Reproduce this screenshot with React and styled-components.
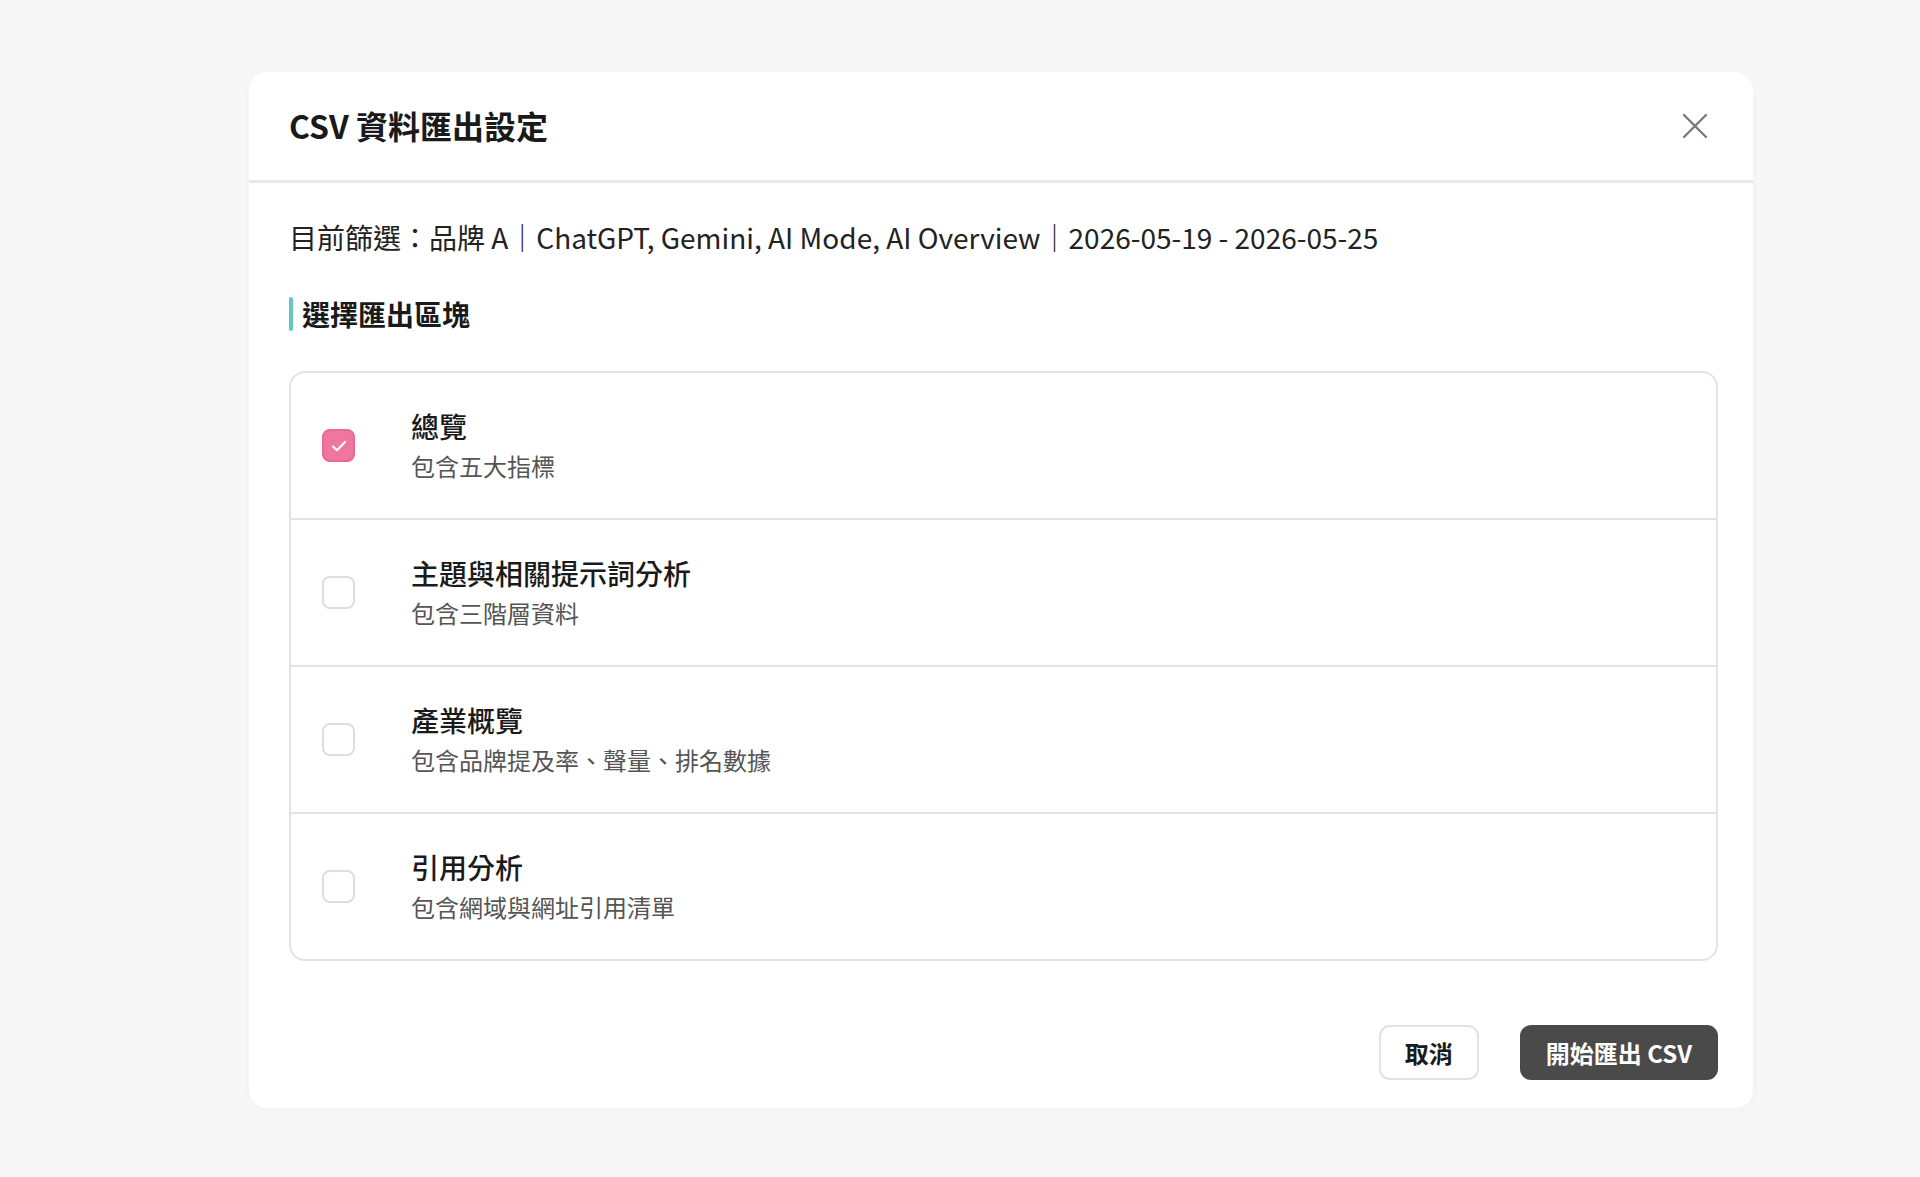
import React, { useState } from 'react';
import styled, { createGlobalStyle } from 'styled-components';

const GlobalStyle = createGlobalStyle`
    html, body {
        margin: 0;
        padding: 0;
        background: #f7f7f7;
    }
    body {
        font-family: "Noto Sans CJK TC", "Noto Sans", "Liberation Sans", sans-serif;
        color: #1c1c1c;
    }
    * { box-sizing: border-box; }
`;

const secciones = [
    { id: 'overview', titulo: '總覽', desc: '包含五大指標' },
    { id: 'topics', titulo: '主題與相關提示詞分析', desc: '包含三階層資料' },
    { id: 'industry', titulo: '產業概覽', desc: '包含品牌提及率、聲量、排名數據' },
    { id: 'citation', titulo: '引用分析', desc: '包含網域與網址引用清單' },
];

const App = () => {
    const [marcados, setMarcados] = useState({ overview: true });

    const toggle = (id) => setMarcados({ ...marcados, [id]: !marcados[id] });

    return (
        <>
            <GlobalStyle />
            <Pagina>
                <ContenedorModal>
                    <EncabezadoModal>
                        <h3>CSV 資料匯出設定</h3>
                        <BotonCerrar aria-label="close">
                            <svg width="26" height="26" viewBox="0 0 26 26" fill="none" stroke="currentColor" strokeWidth="2.4" strokeLinecap="round">
                                <path d="M2 2L24 24M24 2L2 24" />
                            </svg>
                        </BotonCerrar>
                    </EncabezadoModal>

                    <Cuerpo>
                        <Filtro>目前篩選：品牌 A｜ChatGPT, Gemini, AI Mode, AI Overview｜2026-05-19 - 2026-05-25</Filtro>
                        <TituloSeccion>選擇匯出區塊</TituloSeccion>

                        <Lista>
                            {secciones.map((s) => (
                                <Fila key={s.id} onClick={() => toggle(s.id)}>
                                    <Casilla $activo={!!marcados[s.id]}>
                                        {marcados[s.id] && (
                                            <svg width="22" height="22" viewBox="0 0 22 22" fill="none" stroke="#fff" strokeWidth="2.2" strokeLinecap="round" strokeLinejoin="round">
                                                <path d="M5 11.5l4 3.8L17 7" />
                                            </svg>
                                        )}
                                    </Casilla>
                                    <Textos>
                                        <TituloFila>{s.titulo}</TituloFila>
                                        <Descripcion>{s.desc}</Descripcion>
                                    </Textos>
                                </Fila>
                            ))}
                        </Lista>
                    </Cuerpo>

                    <Pie>
                        <Boton>取消</Boton>
                        <Boton $primario>開始匯出 CSV</Boton>
                    </Pie>
                </ContenedorModal>
            </Pagina>
        </>
    );
};

export default App;

const Pagina = styled.div`
    min-height: 100vh;
    padding: 72px 167px 69px 249px;
    display: flex;
    align-items: flex-start;
`;

const ContenedorModal = styled.div`
    width: 1504px;
    height: 1036px;
    background: #fff;
    border-radius: 18px;
    box-shadow: rgba(0, 0, 0, 0.03) 0px 2px 10px 0px;
    display: flex;
    flex-direction: column;
`;

const EncabezadoModal = styled.div`
    height: 111px;
    display: flex;
    align-items: center;
    justify-content: space-between;
    padding: 0 40px 0 40px;
    border-bottom: 3px solid #e8e8e8;

    h3 {
        margin: 0;
        font-size: 32px;
        font-weight: 700;
        color: #1a1a1a;
        line-height: 1.3;
    }
`;

const BotonCerrar = styled.button`
    width: 36px;
    height: 36px;
    display: flex;
    align-items: center;
    justify-content: center;
    border: none;
    background: none;
    padding: 0;
    cursor: pointer;
    color: #7a7a7a;
`;

const Cuerpo = styled.div`
    flex: 1;
    padding: 33px 35px 0 40px;
    display: flex;
    flex-direction: column;
`;

const Filtro = styled.div`
    font-size: 28px;
    line-height: 42px;
    color: #222;
`;

const TituloSeccion = styled.div`
    margin-top: 35px;
    display: flex;
    align-items: center;
    gap: 9px;
    font-size: 28px;
    font-weight: 700;
    line-height: 42px;
    color: #1a1a1a;

    &::before {
        content: '';
        width: 4px;
        height: 34px;
        border-radius: 2px;
        background: #66c6c4;
    }
`;

const Lista = styled.div`
    margin-top: 36px;
    border: 2px solid #e3e3e3;
    border-radius: 16px;
    overflow: hidden;
`;

const Fila = styled.div`
    box-sizing: content-box;
    height: 145px;
    display: flex;
    align-items: center;
    padding: 0 0 0 31px;
    gap: 56px;
    cursor: pointer;

    & + & {
        border-top: 2px solid #e3e3e3;
    }
`;

const Casilla = styled.div`
    width: 33px;
    height: 33px;
    flex-shrink: 0;
    border-radius: 8px;
    display: flex;
    align-items: center;
    justify-content: center;
    border: 2px solid ${(p) => (p.$activo ? '#e86a92' : '#dedede')};
    background: ${(p) => (p.$activo ? '#ef769c' : '#fff')};
`;

const Textos = styled.div`
    display: flex;
    flex-direction: column;
`;

const TituloFila = styled.div`
    font-size: 28px;
    font-weight: 500;
    line-height: 39px;
    color: #1a1a1a;
`;

const Descripcion = styled.div`
    font-size: 24px;
    line-height: 39px;
    color: #555;
`;

const Pie = styled.div`
    display: flex;
    justify-content: flex-end;
    align-items: center;
    gap: 41px;
    padding: 0 35px 28px 40px;
`;

const Boton = styled.button`
    height: 55px;
    padding: 0 24px;
    border-radius: 11px;
    font-family: "Noto Sans CJK TC", "Noto Sans", sans-serif;
    font-size: 24px;
    font-weight: 700;
    cursor: pointer;
    border: 2px solid ${(p) => (p.$primario ? '#4a4a4a' : '#e2e2e2')};
    background: ${(p) => (p.$primario ? '#4a4a4a' : '#fff')};
    color: ${(p) => (p.$primario ? '#fff' : '#1a1a1a')};
`;
